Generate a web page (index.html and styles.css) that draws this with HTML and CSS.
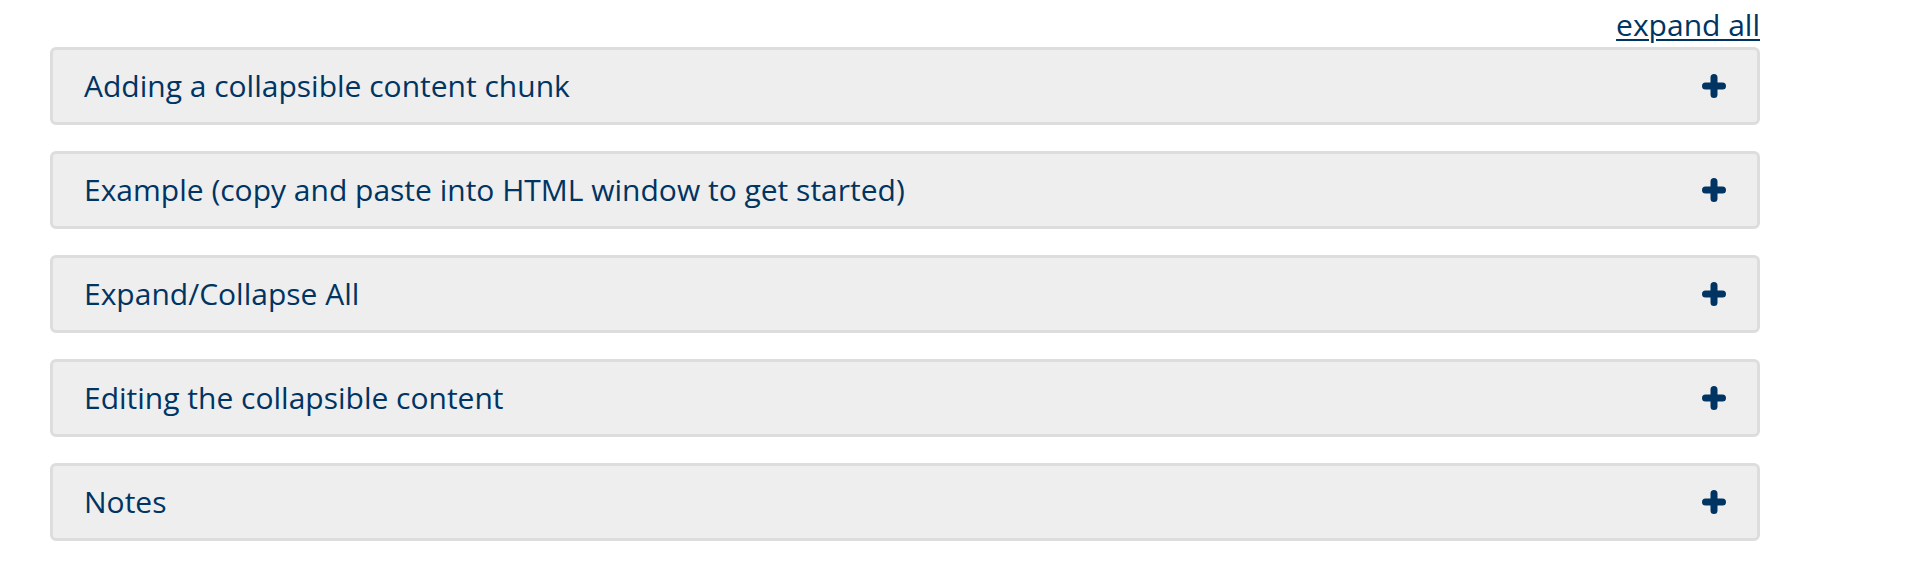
FILE: index.html
```html
<!DOCTYPE html>
<html lang="en">
<head>
<meta charset="utf-8">
<title>Collapsible content</title>
<link rel="stylesheet" href="styles.css">
</head>
<body>
<div class="wrap">
  <div class="toolbar"><a class="expand-all" href="#">expand all</a></div>
  <div class="list">
    <div class="item"><span class="title">Adding a collapsible content chunk</span><svg class="plus" viewBox="0 0 24 24" width="24" height="24"><path d="M3.5 12H20.5M12 3.5V20.5"/></svg></div>
    <div class="item"><span class="title">Example (copy and paste into HTML window to get started)</span><svg class="plus" viewBox="0 0 24 24" width="24" height="24"><path d="M3.5 12H20.5M12 3.5V20.5"/></svg></div>
    <div class="item"><span class="title">Expand/Collapse All</span><svg class="plus" viewBox="0 0 24 24" width="24" height="24"><path d="M3.5 12H20.5M12 3.5V20.5"/></svg></div>
    <div class="item"><span class="title">Editing the collapsible content</span><svg class="plus" viewBox="0 0 24 24" width="24" height="24"><path d="M3.5 12H20.5M12 3.5V20.5"/></svg></div>
    <div class="item"><span class="title">Notes</span><svg class="plus" viewBox="0 0 24 24" width="24" height="24"><path d="M3.5 12H20.5M12 3.5V20.5"/></svg></div>
  </div>
</div>
</body>
</html>
```
FILE: styles.css
```css
html, body {
  margin: 0;
  padding: 0;
  background: #ffffff;
}
body {
  font-family: "Open Sans", "Noto Sans", "Liberation Sans", sans-serif;
  font-size: 30px;
  color: #003462;
}
.wrap {
  width: 1710px;
  margin-left: 50px;
}
.toolbar {
  display: flex;
  justify-content: flex-end;
  padding-top: 6px;
  margin-bottom: 3px;
  line-height: 38px;
}
.expand-all {
  color: #003462;
  text-decoration: underline;
  text-decoration-thickness: 2px;
  text-underline-offset: 3px;
}
.list {
  display: flex;
  flex-direction: column;
  gap: 26px;
}
.item {
  display: flex;
  align-items: center;
  justify-content: space-between;
  background: #eeeeee;
  border: 3px solid #dddddd;
  border-radius: 6px;
  padding: 17px 31px 17px 31px;
  line-height: 38px;
}
.plus {
  display: block;
  fill: none;
  stroke: #003462;
  stroke-width: 7;
  stroke-linecap: round;
}
```
